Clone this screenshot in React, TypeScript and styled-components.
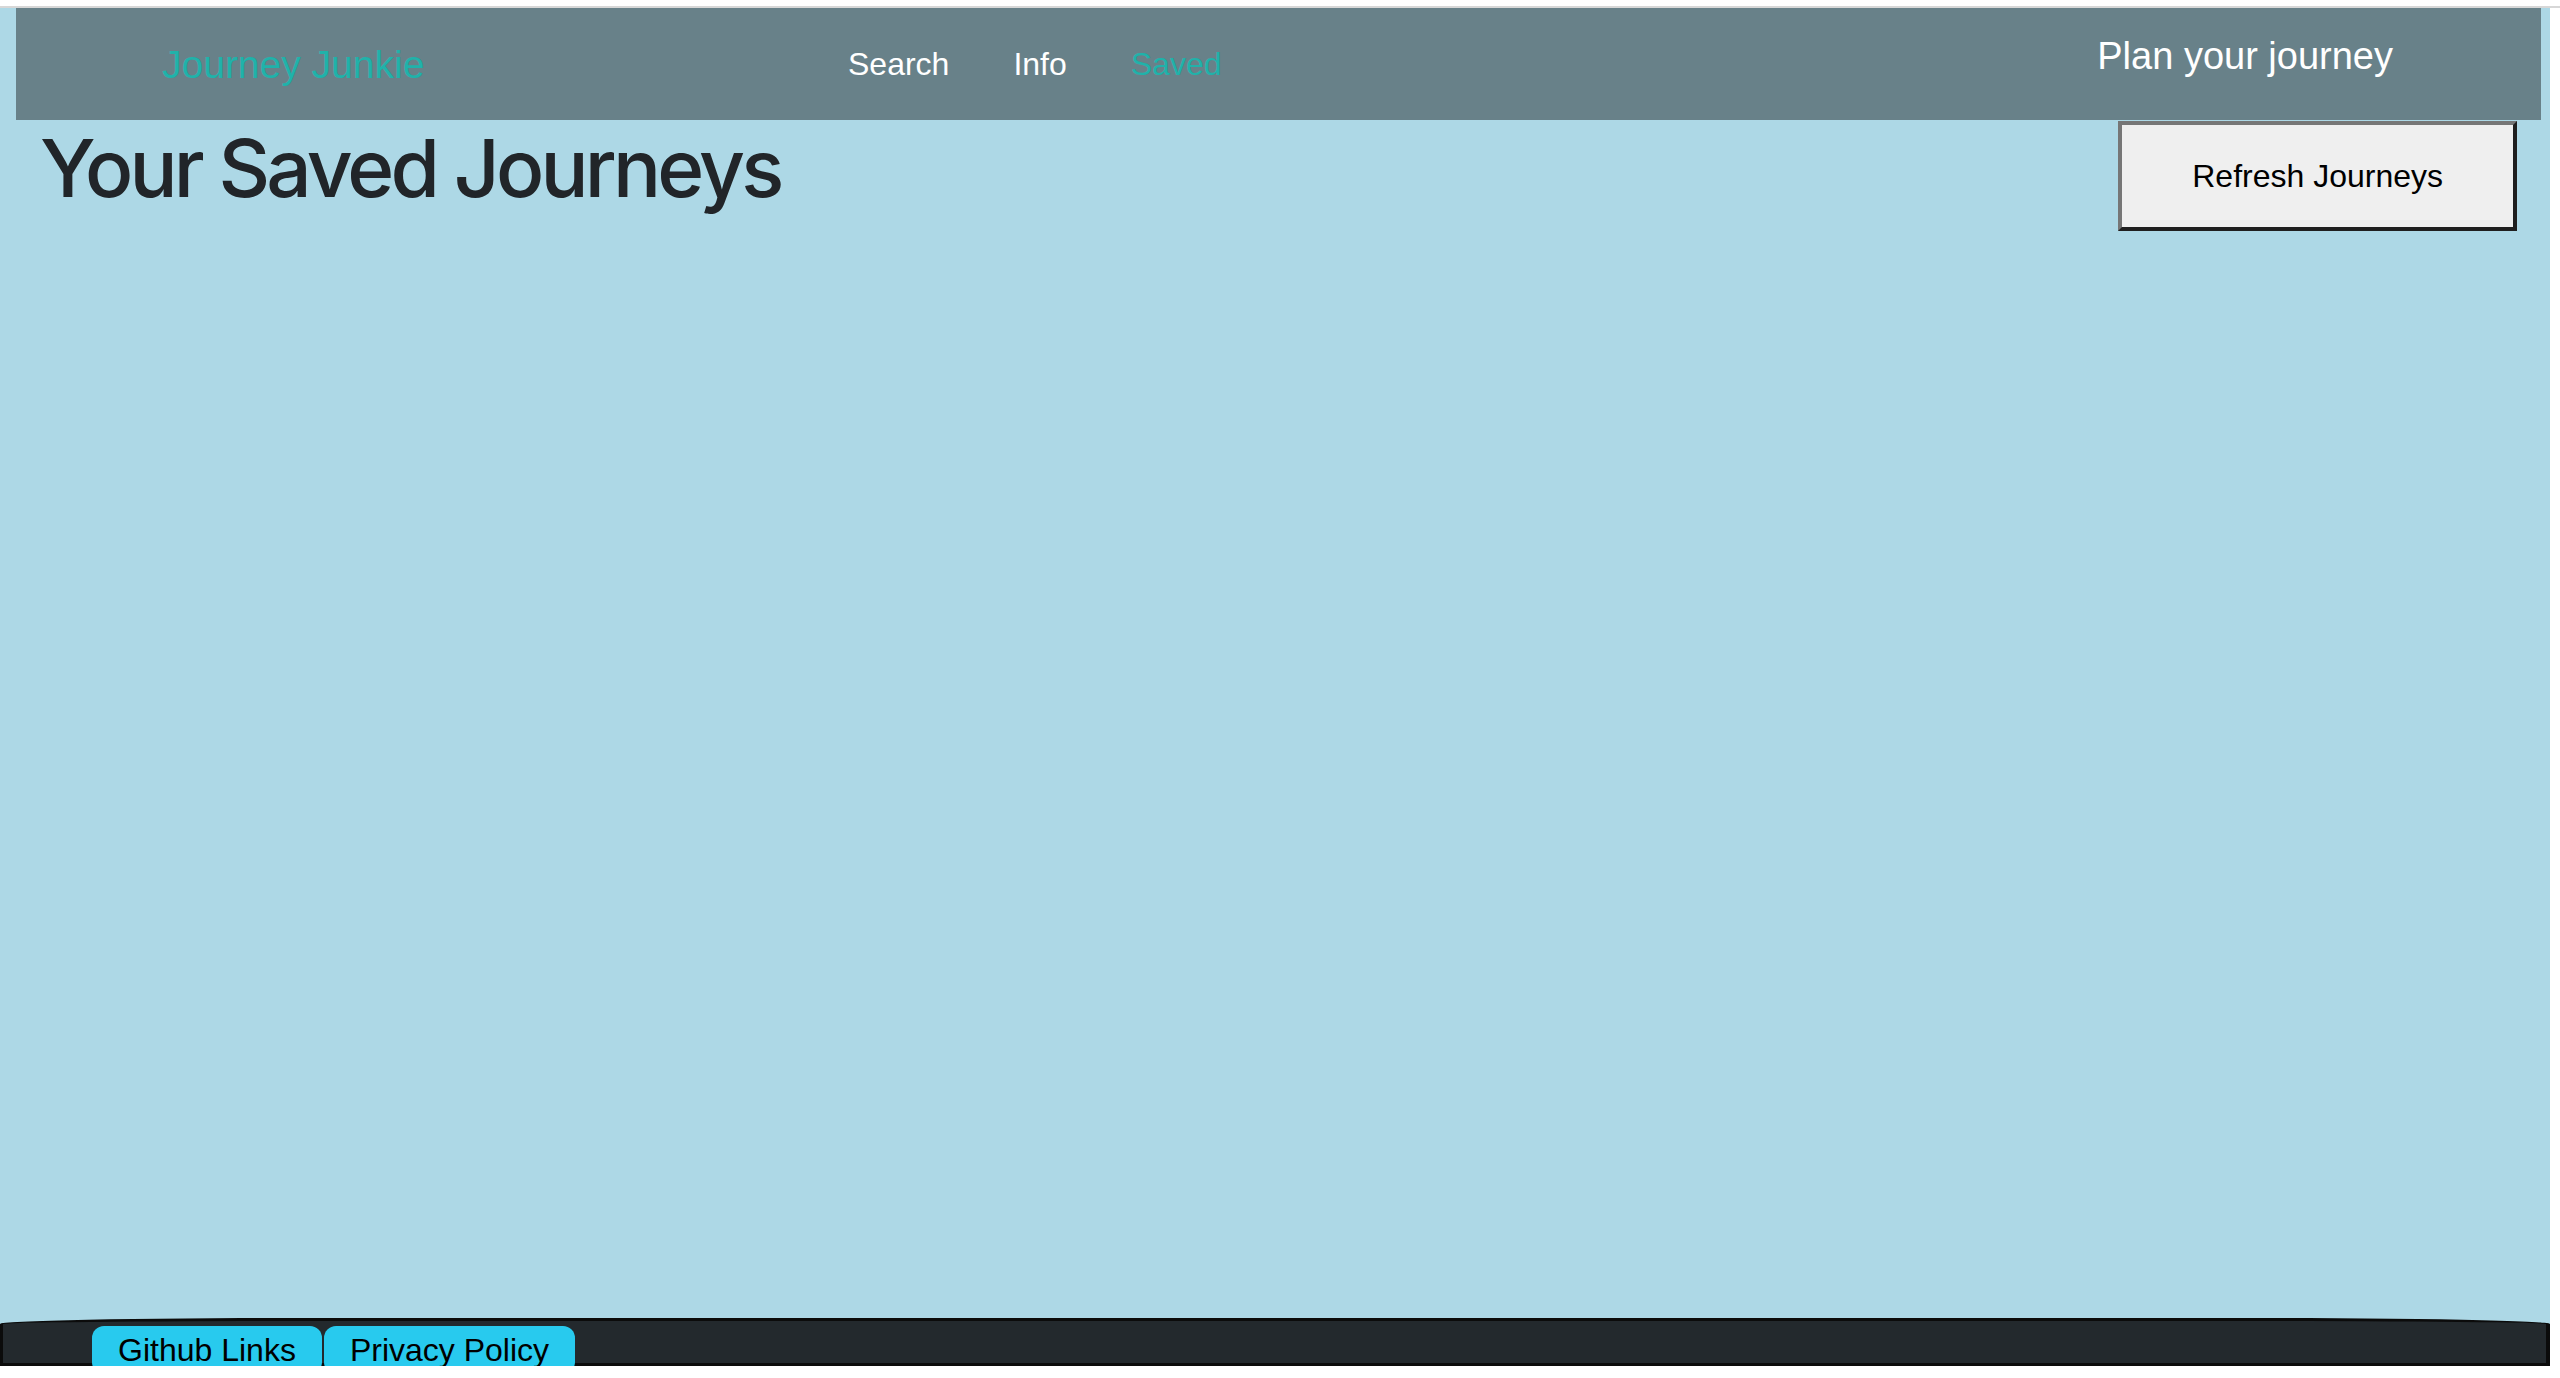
import React from "react";
import styled, { createGlobalStyle } from "styled-components";

const GlobalStyle = createGlobalStyle`
  html, body {
    margin: 0;
    padding: 0;
    background: #ffffff;
  }
  body {
    font-family: "Liberation Sans", Arial, sans-serif;
  }
  * {
    box-sizing: border-box;
  }
`;

const Page = styled.div`
  padding-top: 6px;
`;

const Frame = styled.div`
  border-top: 2px solid #d7d7d7;
`;

const Shell = styled.div`
  width: 2550px;
  height: 1358px;
  background: #add8e6;
  display: flex;
  flex-direction: column;
  overflow: hidden;
`;

const Navbar = styled.nav`
  margin: 0 9px 0 16px;
  height: 112px;
  background: #688189;
  display: flex;
  align-items: center;
`;

const Brand = styled.a`
  flex: 0 0 800px;
  padding-left: 146px;
  font-size: 39px;
  line-height: 1;
  color: #20b2aa;
  text-decoration: none;
`;

const NavList = styled.ul`
  display: flex;
  list-style: none;
  margin: 0;
  padding: 0;
`;

const NavLink = styled.a<{ $active?: boolean }>`
  display: block;
  padding: 0 32px;
  font-size: 32px;
  line-height: 1.5;
  color: ${(p) => (p.$active ? "#20b2aa" : "#ffffff")};
  text-decoration: none;
`;

const Tagline = styled.div`
  margin-left: auto;
  margin-right: 148px;
  align-self: flex-start;
  padding-top: 29px;
  font-size: 38px;
  line-height: 1;
  color: #ffffff;
`;

const ContentHeader = styled.div`
  display: flex;
  justify-content: space-between;
  align-items: flex-start;
  padding: 0 33px 0 40px;
`;

const Title = styled.h1`
  margin: 0;
  font-family: Inter, "Liberation Sans", sans-serif;
  font-weight: 500;
  font-size: 80px;
  line-height: 96px;
  letter-spacing: -3.8px;
  color: #212529;
`;

const RefreshButton = styled.button`
  margin-top: 1px;
  padding: 32px 70px;
  border-style: solid;
  border-width: 4px;
  border-color: #767676 #1f1f1f #1f1f1f #767676;
  background: #efefef;
  font-family: "Liberation Sans", Arial, sans-serif;
  font-size: 32px;
  line-height: 38px;
  color: #000000;
`;

const Footer = styled.footer`
  margin-top: auto;
  height: 48px;
  background: #23292d;
  border: 3px solid #0b0b0b;
  border-right-width: 4px;
  border-radius: 300px 300px 0 0 / 6px 6px 0 0;
  padding: 5px 0 0 89px;
  display: flex;
  align-items: flex-start;
  gap: 2px;
`;

const FooterButton = styled.button`
  flex: 0 0 auto;
  height: 48px;
  padding: 0 26px;
  border: none;
  border-radius: 12px;
  background: #28caee;
  font-family: "Liberation Sans", Arial, sans-serif;
  font-size: 32px;
  line-height: 48px;
  color: #000000;
`;

export default function App() {
  return (
    <Page>
      <GlobalStyle />
      <Frame>
        <Shell>
          <Navbar>
            <Brand href="#">Journey Junkie</Brand>
            <NavList>
              <li>
                <NavLink href="#">Search</NavLink>
              </li>
              <li>
                <NavLink href="#">Info</NavLink>
              </li>
              <li>
                <NavLink href="#" $active>
                  Saved
                </NavLink>
              </li>
            </NavList>
            <Tagline>Plan your journey</Tagline>
          </Navbar>
          <ContentHeader>
            <Title>Your Saved Journeys</Title>
            <RefreshButton>Refresh Journeys</RefreshButton>
          </ContentHeader>
          <Footer>
            <FooterButton>Github Links</FooterButton>
            <FooterButton>Privacy Policy</FooterButton>
          </Footer>
        </Shell>
      </Frame>
    </Page>
  );
}
